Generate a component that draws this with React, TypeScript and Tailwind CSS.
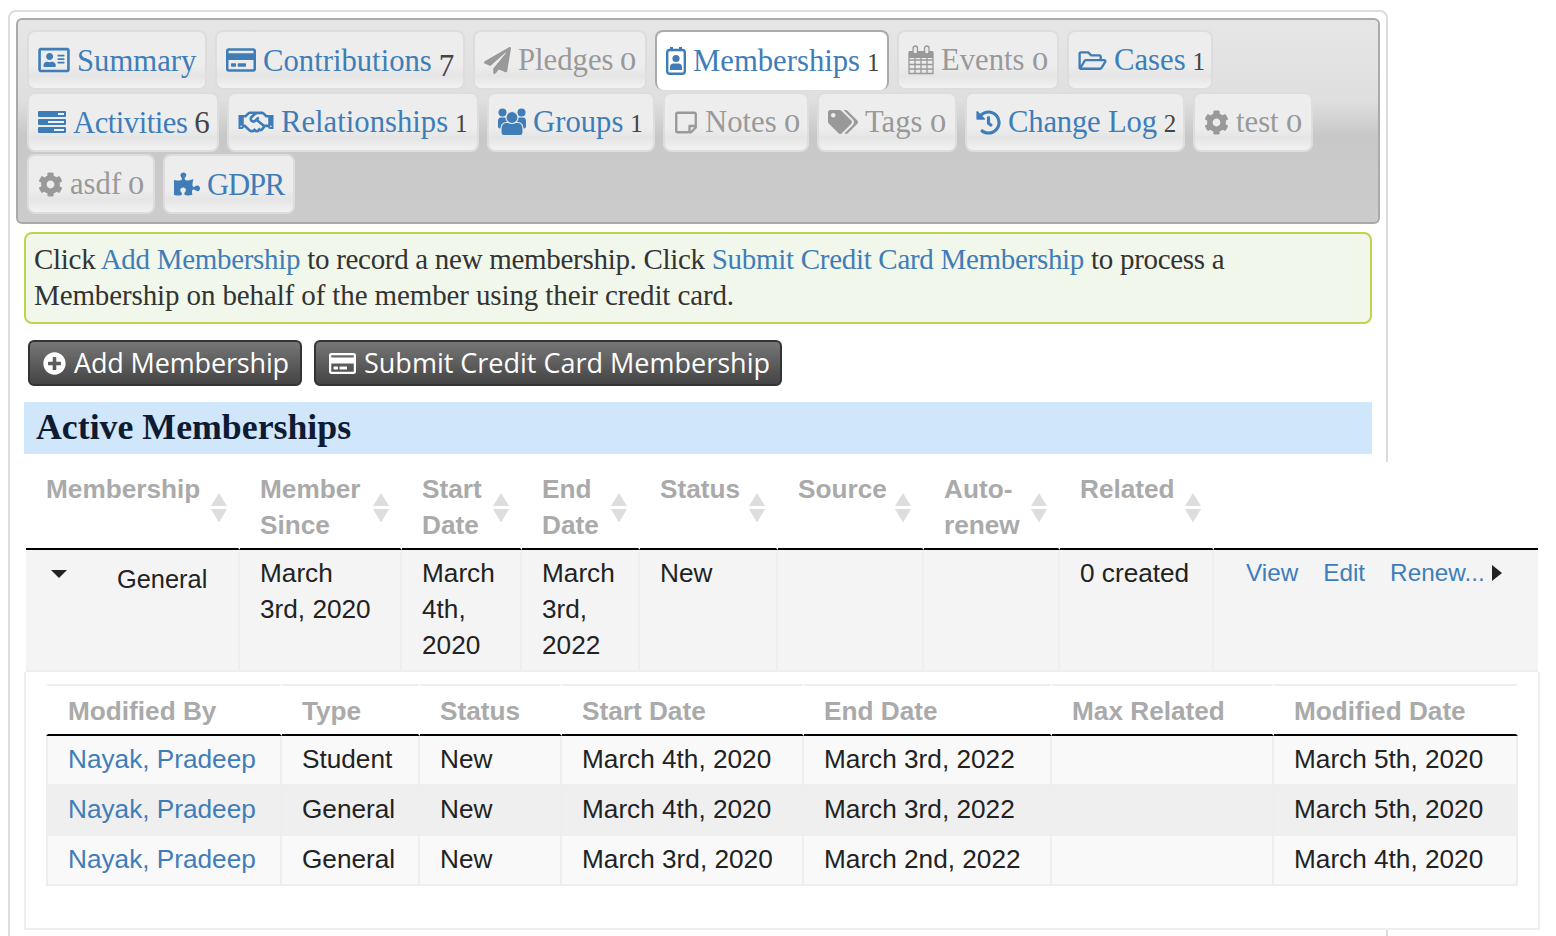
import type { ReactNode } from "react";
import {
  FaCog,
  FaHistory,
  FaPaperPlane,
  FaPlusCircle,
  FaPuzzlePiece,
  FaRegAddressCard,
  FaRegCreditCard,
  FaRegFolderOpen,
  FaRegHandshake,
  FaRegStickyNote,
  FaTags,
} from "react-icons/fa";

const ActivitiesIcon = () => (
  <svg viewBox="0 0 28 22" className="h-[22px] w-[28px]">
    <g fill="currentColor">
      <rect y="0" width="28" height="6" rx="1" />
      <rect y="8" width="28" height="6" rx="1" />
      <rect y="16" width="28" height="6" rx="1" />
    </g>
    <g fill="#eef3f8">
      <rect x="20" y="2" width="6" height="2" />
      <rect x="10" y="10" width="16" height="2" />
      <rect x="16" y="18" width="10" height="2" />
    </g>
  </svg>
);

const GroupsIcon = () => (
  <svg viewBox="0 0 28 28" className="h-[28px] w-[28px]">
    <g fill="currentColor">
      <circle cx="4.5" cy="4.5" r="4" />
      <circle cx="23.5" cy="4.5" r="4" />
      <path d="M0 13q0-3.500 3-3.500h4q2 0 2 3v8H2q-2 0-2-2zM28 13q0-3.500-3-3.500h-4q-2 0-2 3v8h7q2 0 2-2z" />
      <path
        d="M3 21q0-6 5-6.500h12q5 .5 5 6.500v4q0 2.500-3 2.500H6q-3 0-3-2.500z"
        stroke="#e8e8e8"
        strokeWidth="1.2"
      />
      <circle cx="14" cy="9.500" r="6" stroke="#e8e8e8" strokeWidth="1.2" />
    </g>
  </svg>
);

const CalendarIcon = () => (
  <svg viewBox="0 0 26 30" className="h-[30px] w-[26px] text-[#999]">
    <path
      d="M1 7.500h24v21H1zM1 15h24M1 19.500h24M1 24h24M7 13v15M13 13v15M19 13v15"
      fill="none"
      stroke="currentColor"
      strokeWidth="1.3"
    />
    <path d="M1 6h24v7H1z" fill="currentColor" />
    <rect x="5" y="1" width="4.500" height="8" rx="2.200" fill="#e9e9e9" stroke="currentColor" strokeWidth="1.3" />
    <rect x="16.500" y="1" width="4.500" height="8" rx="2.200" fill="#e9e9e9" stroke="currentColor" strokeWidth="1.3" />
  </svg>
);

const BadgeIcon = () => (
  <svg viewBox="0 0 20 28" className="h-[28px] w-[20px]">
    <rect x="1.200" y="3" width="17.600" height="23.800" rx="2.500" fill="none" stroke="currentColor" strokeWidth="2.400" />
    <path d="M4 0h3v4H4zM13 0h3v4h-3z" fill="currentColor" />
    <circle cx="10" cy="11.500" r="3.600" fill="currentColor" />
    <path d="M4 23v-3q0-3.500 3.500-3.500h5q3.500 0 3.500 3.500v3z" fill="currentColor" />
  </svg>
);

const BLUE = "text-[#3f7db9]";
const GREY = "text-[#999]";

type Tab = {
  label: string;
  icon: ReactNode;
  count?: string;
  countClass?: string;
  labelClass?: string;
  off?: boolean;
  active?: boolean;
  w: string;
};

const ZERO = "origin-left scale-x-[1.25] text-[26px] mr-[-3px]";

const tabs: Tab[] = [
  { label: "Summary", icon: <FaRegAddressCard className="h-[28px] w-[32px]" />, w: "w-[180px]" },
  { label: "Contributions", icon: <FaRegCreditCard className="h-[28px] w-[30px]" />, count: "7", countClass: "text-[31px] translate-y-[5px]", w: "w-[250px]" },
  { label: "Pledges", icon: <FaPaperPlane className="h-[27px] w-[27px]" />, count: "0", countClass: ZERO, off: true, w: "w-[174px]" },
  { label: "Memberships", icon: <BadgeIcon />, count: "1", active: true, w: "w-[234px]" },
  { label: "Events", icon: <CalendarIcon />, count: "0", countClass: ZERO, off: true, w: "w-[162px]" },
  { label: "Cases", icon: <FaRegFolderOpen className="h-[25px] w-[29px]" />, count: "1", w: "w-[146px]" },
  { label: "Activities", icon: <ActivitiesIcon />, count: "6", countClass: "text-[31px]", labelClass: "tracking-[-0.5px]", w: "w-[192px]" },
  { label: "Relationships", icon: <FaRegHandshake className="h-[28px] w-[36px]" />, count: "1", w: "w-[252px]" },
  { label: "Groups", icon: <GroupsIcon />, count: "1", w: "w-[168px]" },
  { label: "Notes", icon: <FaRegStickyNote className="h-[25px] w-[24px]" />, count: "0", countClass: ZERO, off: true, w: "w-[146px]" },
  { label: "Tags", icon: <FaTags className="h-[26px] w-[30px]" />, count: "0", countClass: ZERO, off: true, w: "w-[140px]" },
  { label: "Change Log", icon: <FaHistory className="h-[25px] w-[25px]" />, count: "2", labelClass: "tracking-[-0.2px]", w: "w-[220px]" },
  { label: "test", icon: <FaCog className="h-[25px] w-[25px]" />, count: "0", countClass: ZERO, off: true, w: "w-[120px]" },
  { label: "asdf", icon: <FaCog className="h-[25px] w-[25px]" />, count: "0", countClass: ZERO, off: true, w: "w-[128px]" },
  { label: "GDPR", icon: <FaPuzzlePiece className="h-[26px] w-[26px]" />, labelClass: "tracking-[-1.2px]", w: "w-[132px]" },
];

const SortIcon = () => (
  <svg
    viewBox="0 0 16 30"
    className="absolute right-[11px] top-[31px] h-[30px] w-[16px] fill-[#ddd]"
  >
    <path d="M8 0l8 13H0zM0 16h16L8 29.500z" />
  </svg>
);

const mainCols = ["w-[214px]", "w-[162px]", "w-[120px]", "w-[118px]", "w-[138px]", "w-[146px]", "w-[136px]", "w-[154px]", "w-[324px]"];
const mainHeads = ["Membership", "Member Since", "Start Date", "End Date", "Status", "Source", "Auto-renew", "Related"];
const subCols = ["w-[236px]", "w-[138px]", "w-[142px]", "w-[242px]", "w-[248px]", "w-[222px]", "w-[244px]"];
const subHeads = ["Modified By", "Type", "Status", "Start Date", "End Date", "Max Related", "Modified Date"];
const subRows = [
  ["Student", "New", "March 4th, 2020", "March 3rd, 2022", "", "March 5th, 2020"],
  ["General", "New", "March 4th, 2020", "March 3rd, 2022", "", "March 5th, 2020"],
  ["General", "New", "March 3rd, 2020", "March 2nd, 2022", "", "March 4th, 2020"],
];

const mainCell = "border-r-2 border-b-2 border-[#eee] pl-5 pr-6 pt-[5px] pb-[7px] align-top";

const App = () => {
  return (
    <div className="h-[936px] overflow-hidden bg-white pl-2 pt-[10px] [font-family:'Liberation_Serif',serif] text-[30.700px] leading-[36px] text-[#333]">
      <div className="h-[1000px] w-[1380px] rounded-lg border-2 border-[#ddd] px-1.5 pt-1.5">
        {/* tab bar */}
        <div className="flex h-[206px] flex-wrap content-start gap-x-2 gap-y-[2px] rounded-md border-2 border-[#aaa] bg-[linear-gradient(#e6e6e6_0px,#dfdfdf_80px,#c8c8c8_116px,#ccc_100%)] pl-[9px] pt-[10px]">
          {tabs.map((t) => (
            <div
              key={t.label}
              className={`flex h-[60px] items-center gap-[7px] rounded-lg border-2 pl-[9px] ${t.w} ${
                t.active
                  ? "border-[#aaa] border-b-0 bg-white"
                  : "border-[#ddd] bg-[linear-gradient(#ededed_0%,#ededed_60%,#e5e5e5_78%,#f2f2f2_100%)]"
              }`}
            >
              <span className={`flex shrink-0 items-center ${t.off ? GREY : BLUE}`}>{t.icon}</span>
              <span className={`whitespace-nowrap pt-px ${t.off ? GREY : BLUE}`}>
                <span className={t.labelClass}>{t.label}</span>
                {t.count && (
                  <span
                    className={`ml-[7px] inline-block ${t.countClass ?? "text-[25px]"} ${
                      t.off ? "" : "text-[#444]"
                    }`}
                  >
                    {t.count}
                  </span>
                )}
              </span>
            </div>
          ))}
        </div>

        <div className="px-2">
          <div className="mt-2 h-[92px] rounded-lg border-2 border-[#bfd34f] bg-[#f1f7ea] px-2 pt-[7px] text-[29px] tracking-[-0.3px]">
            Click <span className={BLUE}>Add Membership</span> to record a new membership. Click{" "}
            <span className={BLUE}>Submit Credit Card Membership</span> to process a{" "}
            <span className="tracking-[-0.12px]">Membership on behalf of the member using their credit card.</span>
          </div>

          <div className="mt-4 flex gap-3 pl-1 [font-family:'Open_Sans',sans-serif] text-[27px] font-medium text-white [text-shadow:0_1px_2px_#000]">
            <button className="flex h-[46px] w-[274px] items-center gap-2 rounded-md border-2 border-[#333] bg-[linear-gradient(#777,#444)] pl-[13px] tracking-[-0.15px]">
              <FaPlusCircle className="h-[23px] w-[23px]" />
              Add Membership
            </button>
            <button className="flex h-[46px] w-[468px] items-center gap-2 rounded-md border-2 border-[#333] bg-[linear-gradient(#777,#444)] pl-[13px]">
              <FaRegCreditCard className="h-[27px] w-[27px]" />
              Submit Credit Card Membership
            </button>
          </div>

          <div className="mt-4 flex h-[52px] items-center bg-[#d0e6fb] pb-[2px] pl-[12px] text-[35.800px] font-bold text-[#0f1a33]">
            Active Memberships
          </div>

          {/* table spills past the frame on the right, as in the original */}
          <div className="relative mt-2 h-[468px] w-[1516px] bg-white px-[2px] [font-family:'Liberation_Sans',sans-serif] text-[26.200px] text-[#222]">
            <table className="w-[1512px] table-fixed border-separate border-spacing-0">
              <colgroup>
                {mainCols.map((c, i) => (
                  <col key={i} className={c} />
                ))}
              </colgroup>
              <thead>
                <tr>
                  {mainHeads.map((h) => (
                    <th
                      key={h}
                      className="relative border-r-2 border-b-2 border-r-white border-b-black pb-[5px] pl-5 pr-[30px] pt-[9px] text-left align-top font-bold text-[#aaa]"
                    >
                      {h}
                      <SortIcon />
                    </th>
                  ))}
                  <th className="border-b-2 border-black" />
                </tr>
              </thead>
              <tbody>
                <tr className="bg-[#f4f4f4]">
                  <td className={mainCell}>
                    <div className="flex">
                      <svg viewBox="0 0 16 8" className="ml-[5px] mt-[15px] h-2 w-4 shrink-0 fill-[#222]">
                        <path d="M0 0h16L8 8z" />
                      </svg>
                      <span className="ml-[50px] mt-[6px] text-[25.400px]">General</span>
                    </div>
                  </td>
                  <td className={mainCell}>March 3rd, 2020</td>
                  <td className={mainCell}>March 4th, 2020</td>
                  <td className={mainCell}>March 3rd, 2022</td>
                  <td className={mainCell}>New</td>
                  <td className={mainCell} />
                  <td className={mainCell} />
                  <td className={`${mainCell} whitespace-nowrap`}>0 created</td>
                  <td className="border-b-2 border-[#eee] pb-[7px] pl-8 pt-[5px] align-top">
                    <div className={`flex items-center text-[24.300px] ${BLUE}`}>
                      <span>View</span>
                      <span className="ml-[25px]">Edit</span>
                      <span className="ml-[25px]">Renew...</span>
                      <svg viewBox="0 0 10 16" className="ml-[7px] h-4 w-[10px] fill-[#222]">
                        <path d="M0 0l10 8-10 8z" />
                      </svg>
                    </div>
                  </td>
                </tr>
                <tr>
                  <td colSpan={9} className="p-0">
                    <div className="-mx-[2px] h-[258px] border-x-2 border-b-2 border-[#eee] pl-5 pt-3">
                      <table className="w-[1472px] table-fixed border-separate border-spacing-0">
                        <colgroup>
                          {subCols.map((c) => (
                            <col key={c} className={c} />
                          ))}
                        </colgroup>
                        <thead>
                          <tr>
                            {subHeads.map((h, i) => (
                              <th
                                key={h}
                                className={`border-t-2 border-r-2 border-b-2 border-t-[#eee] border-r-white border-b-black pb-[5px] pl-5 pt-[7px] text-left font-bold text-[#aaa] ${
                                  i === 0 ? "border-l-2 border-l-white" : ""
                                }`}
                              >
                                {h}
                              </th>
                            ))}
                          </tr>
                        </thead>
                        <tbody>
                          {subRows.map((row, r) => (
                            <tr key={r} className={r === 1 ? "bg-[#efefef]" : "bg-[#f9f9f9]"}>
                              <td className={`border-x-2 border-b-2 border-[#eee] pb-[7px] pl-5 pt-[5px] ${BLUE}`}>
                                Nayak, Pradeep
                              </td>
                              {row.map((cell, c) => (
                                <td
                                  key={c}
                                  className="border-r-2 border-b-2 border-[#eee] pb-[7px] pl-5 pt-[5px]"
                                >
                                  {cell}
                                </td>
                              ))}
                            </tr>
                          ))}
                        </tbody>
                      </table>
                    </div>
                  </td>
                </tr>
              </tbody>
            </table>
          </div>
        </div>
      </div>
    </div>
  );
};

export default App;
